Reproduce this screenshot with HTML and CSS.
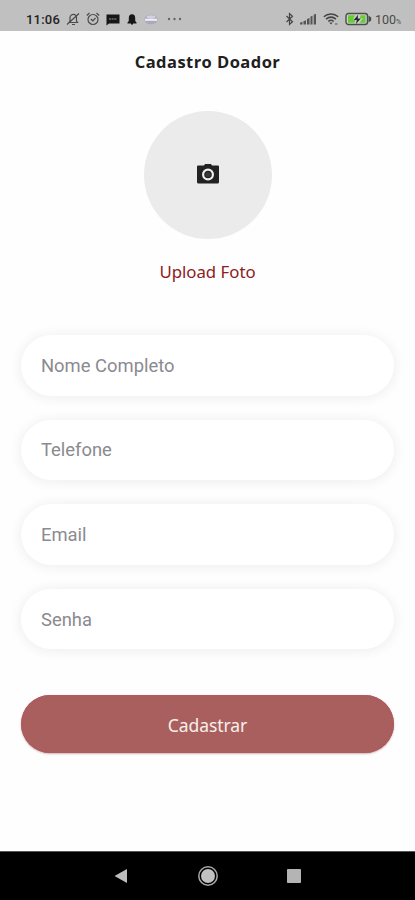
FILE: index.html
```html
<!DOCTYPE html>
<html lang="pt-BR">
<head>
<meta charset="utf-8">
<title>Cadastro Doador</title>
<link rel="stylesheet" href="styles.css">
</head>
<body>
<div class="screen">
  <header class="status">
    <div class="status-left">
      <span class="time">11:06</span>
      <svg width="14" height="14" viewBox="0 0 14 14" fill="none" stroke="#4a4a4a" stroke-width="1.2"><path d="M3 10.5h8.5l-1-1.5V5.500C10.500 3.500 9 2.300 7.500 2.300S4 3.500 4 5.500V9zM6 12.500h3M1 12.500L13 1.500"/></svg>
      <svg width="14" height="14" viewBox="0 0 14 14" fill="none" stroke="#4a4a4a" stroke-width="1.200"><circle cx="7" cy="7.500" r="5"/><path d="M.8 3.500L3.500 1M10.500 1l2.700 2.500M4.800 7l2 1.800L9.500 6"/></svg>
      <svg width="14" height="14" viewBox="0 0 14 14"><path d="M.5 2.500h13v9H3l-2.500 2z" fill="#171717"/><path d="M3 7h8" stroke="#999" stroke-width="1.200" stroke-dasharray="2 .6"/></svg>
      <svg class="bell" width="10" height="14" viewBox="0 0 10 14"><path d="M5 2.300C2.800 2.300 1.800 4 1.800 6v3L.5 10.500v1h9v-1L8.200 9V6c0-2-1-3.700-3.200-3.700zM4 11.500h2v1H4z" fill="#171717"/></svg>
      <svg width="14" height="14" viewBox="0 0 14 14"><ellipse cx="7" cy="7.500" rx="6.500" ry="4.800" fill="#aaa8bd"/><ellipse cx="7" cy="5" rx="4.500" ry="1.700" fill="#d2d1dd"/><path d="M1 7.800h12" stroke="#f2f2f6" stroke-width="2"/></svg>
      <svg class="dots" width="16" height="14" viewBox="0 0 16 14" fill="#666"><circle cx="1" cy="7" r="1.200"/><circle cx="6.500" cy="7" r="1.200"/><circle cx="12" cy="7" r="1.200"/></svg>
    </div>
    <div class="status-right">
      <svg width="9" height="14" viewBox="0 0 9 14" fill="none" stroke="#444" stroke-width="1.200"><path d="M1.500 4l6 5.800-3 2.700v-11l3 2.700-6 5.800"/></svg>
      <svg width="17" height="14" viewBox="0 0 17 14" fill="#555"><path d="M0 12.500v-1.800l2.500-1v2.800zM3.500 12.500V9.200L6 8.200v4.300zM7 12.500V7l2.500-1v6.500zM10.500 12.500V4.500l2-.8v8.800zM13.700 12.500V2.800l2.300-1v10.700z"/></svg>
      <svg width="16" height="14" viewBox="0 0 16 14" fill="none" stroke="#444" stroke-width="1.500"><path d="M.8 4.700c4-3.600 10.400-3.600 14.400 0M3 7.200c3-2.500 7-2.500 10 0M5.300 9.500c1.500-1.300 3.900-1.300 5.400 0"/><path d="M6.300 10.500h3.400L8 12.500z" fill="#444" stroke="none"/><path d="M12 12h2.500" stroke="#777"/></svg>
      <svg width="27" height="14" viewBox="0 0 27 14"><rect x="1" y="1.500" width="21.500" height="11" rx="2.500" fill="#cecece" stroke="#4b4b4b" stroke-width="1.400"/><path d="M3 3.300h7L8 7.500h2.500L9.500 10.800H3zM15.500 3.300h5v7.500h-6l3.500-4.500h-3z" fill="#65ce35"/><path d="M13 2.700L8.800 8h3l-.8 4 4.800-5.500h-3z" fill="#292929"/><path d="M23.500 3.500l2.700 2v3l-2.700 2z" fill="#4b4b4b"/></svg>
      <span class="charge">100<small>%</small></span>
    </div>
  </header>
  <main>
    <h1>Cadastro Doador</h1>
    <div class="avatar">
      <svg width="22" height="20" viewBox="0 0 22 20"><path d="M1 1.500h6L8 0h6l1 1.500h6q1 0 1 1V18q0 1.500-1.500 1.500h-19Q0 19.500 0 18V2.500q0-1 1-1z" fill="#222"/><circle cx="11" cy="10.500" r="4.900" fill="#222" stroke="#f0f0f0" stroke-width="2.200"/><circle cx="11" cy="10.500" r="2.600" fill="#393939"/></svg>
    </div>
    <p class="upload">Upload Foto</p>
    <form>
      <input type="text" placeholder="Nome Completo">
      <input type="tel" placeholder="Telefone">
      <input type="email" placeholder="Email">
      <input type="password" placeholder="Senha">
      <button type="button">Cadastrar</button>
    </form>
  </main>
  <nav>
    <svg width="14" height="16" viewBox="0 0 14 16"><path d="M13 1v14L.5 8z" fill="#bdbdbd"/></svg>
    <svg width="22" height="22" viewBox="0 0 22 22"><circle cx="11" cy="11" r="9.200" fill="none" stroke="#a8a8a8" stroke-width="1.500"/><circle cx="11" cy="11" r="7" fill="#c1c1c1"/></svg>
    <svg width="14" height="14" viewBox="0 0 14 14"><rect width="14" height="14" rx=".8" fill="#b4b4b4"/></svg>
  </nav>
</div>
</body>
</html>
```
FILE: styles.css
```css
* { box-sizing: border-box; }
body { margin: 0; background: #fefefe; }
.screen { width: 415px; height: 900px; display: flex; flex-direction: column; overflow: hidden; }
.status { height: 31px; flex: none; background: #c0c0c0; display: flex; justify-content: space-between; padding: 8px 13px 0 26px; font-family: Roboto, sans-serif; }
.status-left, .status-right { display: flex; align-items: center; height: 22px; }
.status svg { display: block; overflow: visible; }
.status-left { gap: 6px; }
.time { width: 34px; font-size: 13px; font-weight: 500; letter-spacing: .2px; color: #222; white-space: nowrap; }
.bell { margin-left: 1px; }
.status-left .dots { margin-left: 4px; }
.status-left svg:nth-of-type(5) { margin-left: 1px; }
.status-right { gap: 6px; }
.charge { width: 27px; margin-left: -3px; font-size: 12.500px; color: #4a4a4a; white-space: nowrap; }
.charge small { font-size: 7px; }
main { flex: 1; display: flex; flex-direction: column; align-items: center; }
h1 { margin: 19px 0 0; font: 700 16.500px/24px "Open Sans", sans-serif; letter-spacing: .45px; color: #202020; }
.avatar { width: 128px; height: 128px; margin-top: 37px; border-radius: 50%; background: #ebebeb; display: flex; align-items: center; justify-content: center; padding-bottom: 2px; }
.avatar svg { overflow: visible; }
.upload { margin: 21px 0 0; font: 400 16.800px/24px "Noto Sans", sans-serif; color: #8c2020; }
form { width: 373px; margin-top: 51px; display: flex; flex-direction: column; gap: 24px; }
input { display: block; width: 100%; height: 60.600px; padding: 0 20px; border: 0; border-radius: 31px; background: #fff; box-shadow: 0 1px 12px 2px rgba(0, 0, 0, .06); font: 400 18.400px Roboto, sans-serif; }
input::placeholder { color: #8a8a90; opacity: 1; }
button { width: 100%; height: 58px; margin-top: 22px; padding: 1px 0 0; border: 0; border-radius: 29px; background: #a85f5e; color: #f8eeea; font: 400 17.500px "Noto Sans", sans-serif; letter-spacing: -.05px; box-shadow: 0 1px 2px rgba(100, 50, 40, .35), inset 0 0 1px 1px #b4585c; }
nav { height: 49px; flex: none; background: #000; border-top: 1px solid #555; display: flex; align-items: center; justify-content: space-between; padding: 0 114px; }
```
